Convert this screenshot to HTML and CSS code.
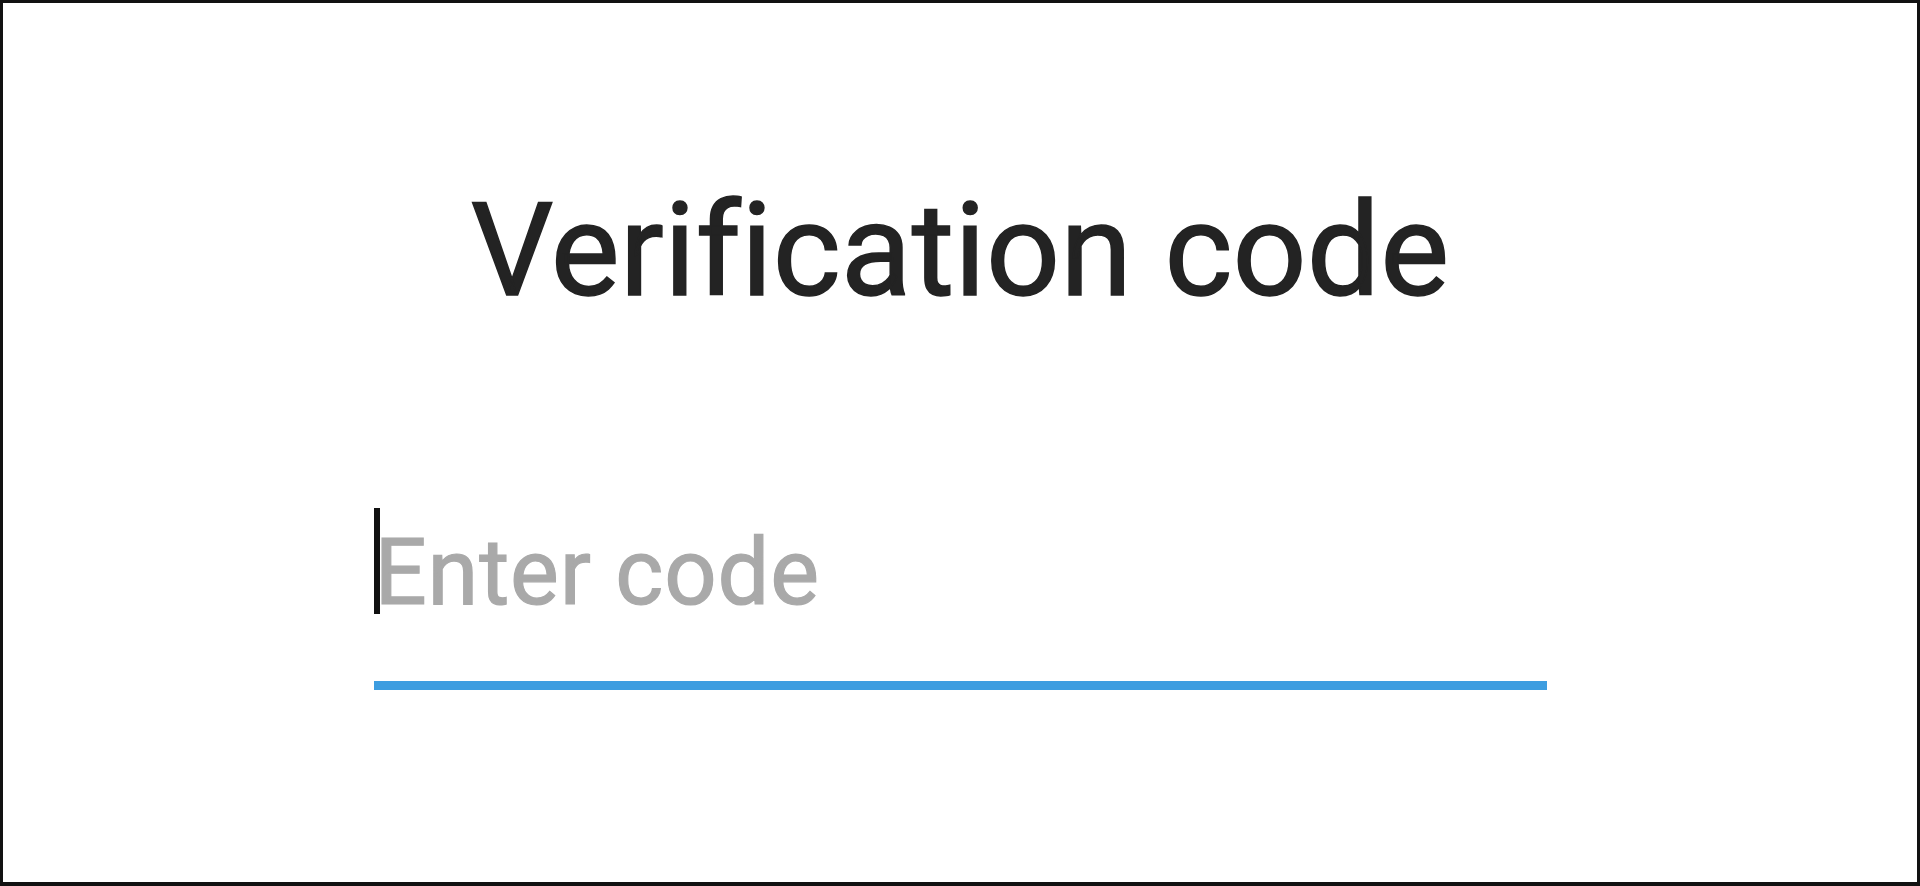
FILE: index.html
```html
<!doctype html>
<html lang="en">
<head>
	<meta charset="UTF-8">
	<title>Verification code</title>
	<link rel="stylesheet" href="styles.css">
</head>
<body>
	<div class="frame">
		<h1 class="title">Verification code</h1>
		<div class="field">
			<span class="caret"></span>
			<span class="placeholder">Enter code</span>
		</div>
	</div>
</body>
</html>
```
FILE: styles.css
```css
*{margin: 0;padding: 0;box-sizing: border-box;}
html,body{height: 100%;background: #fff;}
body{font-family: Roboto, "Liberation Sans", sans-serif;}
.frame{height: 100vh; border: 3px solid #111; border-bottom-width: 4px; display: flex; flex-direction: column; align-items: center; padding-top: 170px;}
.title{font-size: 130px; line-height: 156px; font-weight: 400; color: #232323; -webkit-text-stroke: 1.5px #232323; letter-spacing: 0.1px;}
.field{width: 1173px; margin-top: 179px; display: flex; align-items: flex-start; padding-bottom: 55px; border-bottom: 9px solid #3d9de0;}
.caret{width: 6px; height: 106px; background: #111; flex: none;}
.placeholder{font-size: 92px; line-height: 106px; margin-top: 12px; color: #a9a9a9; -webkit-text-stroke: 1.2px #a9a9a9; margin-left: -5px; letter-spacing: 0.8px;}
```
